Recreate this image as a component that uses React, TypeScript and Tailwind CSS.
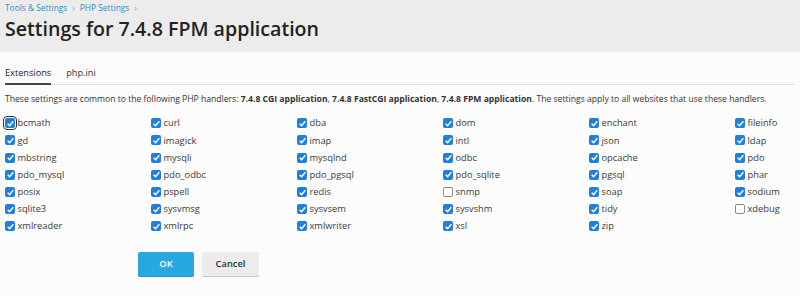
import { useState } from "react"

const extensions: [string, boolean][] = [
  ["bcmath", true], ["curl", true], ["dba", true], ["dom", true], ["enchant", true], ["fileinfo", true],
  ["gd", true], ["imagick", true], ["imap", true], ["intl", true], ["json", true], ["ldap", true],
  ["mbstring", true], ["mysqli", true], ["mysqlnd", true], ["odbc", true], ["opcache", true], ["pdo", true],
  ["pdo_mysql", true], ["pdo_odbc", true], ["pdo_pgsql", true], ["pdo_sqlite", true], ["pgsql", true], ["phar", true],
  ["posix", true], ["pspell", true], ["redis", true], ["snmp", false], ["soap", true], ["sodium", true],
  ["sqlite3", true], ["sysvmsg", true], ["sysvsem", true], ["sysvshm", true], ["tidy", true], ["xdebug", false],
  ["xmlreader", true], ["xmlrpc", true], ["xmlwriter", true], ["xsl", true], ["zip", true],
]

function Check({ name, initial, focused }: { name: string; initial: boolean; focused?: boolean }) {
  const [on, setOn] = useState(initial)
  return (
    <label className="flex items-center h-[17.2px] cursor-pointer">
      <span
        onClick={() => setOn(!on)}
        className={
          "w-[10px] h-[10px] rounded-[2px] flex items-center justify-center shrink-0 " +
          (on ? "bg-[#1e80dc] " : "bg-white border border-[#8a8a8a] ") +
          (focused ? "outline outline-[1.5px] outline-[#333] outline-offset-[1px]" : "")
        }
      >
        {on && (
          <svg viewBox="0 0 12 12" className="w-[9px] h-[9px]">
            <path d="M2.2 6.3 L4.8 8.8 L9.8 3" fill="none" stroke="white" strokeWidth="1.9" />
          </svg>
        )}
      </span>
      <span className="ml-[2.5px] text-[9.3px] text-[#3a3a3a]">{name}</span>
    </label>
  )
}

export default function App() {
  return (
    <div className="w-[800px] h-[296px] bg-[#fcfcfc] overflow-hidden" style={{ fontFamily: '"Open Sans", sans-serif' }}>
      <div className="bg-[#ececec] h-[52px] px-[5px] pt-[1px]">
        <div className="flex items-center text-[8.4px] text-[#2a8fc4] h-[14px]">
          <span>Tools &amp; Settings</span>
          <span className="mx-[5px] text-[#999]">›</span>
          <span>PHP Settings</span>
          <span className="mx-[5px] text-[#999]">›</span>
        </div>
        <h1 className="text-[19.6px] leading-[26px] font-semibold text-[#222] mt-[1px]">Settings for 7.4.8 FPM application</h1>
      </div>

      <div className="px-[5px]">
        <div className="flex border-b border-[#ddd] mt-[14px] text-[9.2px]">
          <div className="pb-[3px] border-b-2 border-[#444] -mb-px text-[#222]">Extensions</div>
          <div className="ml-[15px] pb-[3px] text-[#333]">php.ini</div>
        </div>

        <p className="mt-[8px] text-[8.6px] text-[#333] whitespace-nowrap">
          These settings are common to the following PHP handlers: <b>7.4.8 CGI application</b>, <b>7.4.8 FastCGI application</b>, <b>7.4.8 FPM application</b>. The settings apply to all websites that use these handlers.
        </p>

        <div className="grid grid-cols-[repeat(6,146px)] mt-[9px]">
          {extensions.map(([n, v], i) => (
            <Check key={n} name={n} initial={v} focused={i === 0} />
          ))}
        </div>

        <div className="flex gap-[8px] ml-[133px] mt-[17px]">
          <button className="w-[56px] h-[24px] bg-[#28a8e0] text-white text-[9.3px] font-semibold rounded-[2px] shadow-[0_1px_0_#1d8fc2]">
            OK
          </button>
          <button className="w-[57px] h-[24px] bg-[#ececec] text-[#333] text-[9.3px] font-semibold rounded-[2px] shadow-[0_1px_0_#c8c8c8]">
            Cancel
          </button>
        </div>
      </div>
    </div>
  )
}
